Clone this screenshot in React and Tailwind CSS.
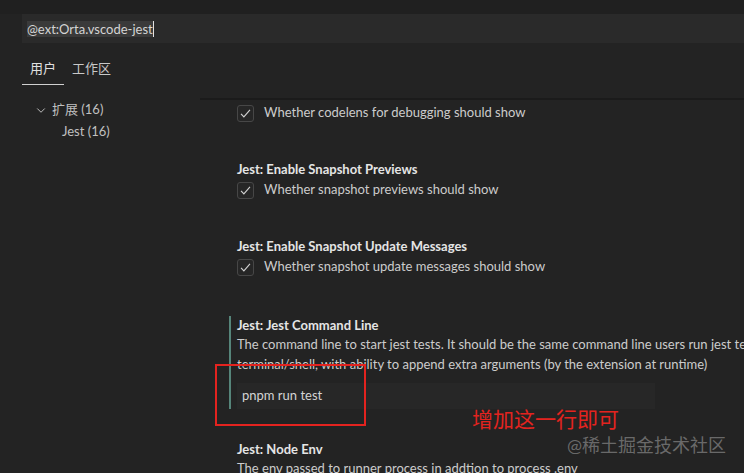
import React from 'react';

const settings = [
  { title: null, label: 'Whether codelens for debugging should show' },
  { title: 'Jest: Enable Snapshot Previews', label: 'Whether snapshot previews should show' },
  { title: 'Jest: Enable Snapshot Update Messages', label: 'Whether snapshot update messages should show' },
];

function Checkbox() {
  return (
    <span className="w-[17px] h-[17px] shrink-0 rounded-[3px] border border-[#474747] bg-[#262626] flex items-center justify-center">
      <svg width="13" height="13" viewBox="0 0 16 16" fill="none" stroke="#d0d0d0" strokeWidth="1.4">
        <path d="M2.5 8.5l3.5 3.8L13.5 3.5" />
      </svg>
    </span>
  );
}

function BoolSetting({ title, label, first }) {
  return (
    <div className={first ? '' : 'mt-[37px]'}>
      {title && <div className="font-bold text-[#e5e5e5] leading-[20px]">{title}</div>}
      <div className={`flex items-center gap-[10px] h-[18px] ${title ? 'mt-[2px]' : ''}`}>
        <Checkbox />
        <span className="whitespace-nowrap">{label}</span>
      </div>
    </div>
  );
}

export default function App() {
  return (
    <div className="relative w-[744px] h-[473px] overflow-hidden bg-[#232323] text-[#cccccc] text-[13px] font-['Lato','Noto_Sans_CJK_SC',sans-serif]">
      <div className="h-[14px] bg-[#202020]" />

      {/* search box */}
      <div className="h-[29px] ml-[22px] bg-[#2a2a2a] flex items-center pl-[5px]">
        <span className="text-[13px] leading-[16px] text-[#d4d4d4] bg-[#3a3a3a] border-r border-[#e0e0e0]">
          @ext:Orta.vscode-jest
        </span>
      </div>

      {/* scope tabs */}
      <div className="flex ml-[22px]">
        <div className="px-[8px] pt-[16px] pb-[7px] leading-[18px] border-b border-[#d0d0d0] text-[#e0e0e0]">用户</div>
        <div className="px-[8px] pt-[16px] pb-[7px] leading-[18px] text-[#c8c8c8]">工作区</div>
      </div>

      <div className="flex">
        {/* table of contents */}
        <div className="w-[200px] shrink-0 pt-[14px] text-[#c0c0c0]">
          <div className="h-[22px] flex items-center pl-[35px]">
            <svg width="12" height="12" viewBox="0 0 16 16" fill="none" stroke="#c0c0c0" strokeWidth="1.3">
              <path d="M3 6l5 5 5-5" />
            </svg>
            <span className="ml-[5px]">扩展 (16)</span>
          </div>
          <div className="h-[22px] flex items-center pl-[62px]">Jest (16)</div>
        </div>

        {/* settings list */}
        <div className="flex-1 min-w-0">
          <div className="h-[13px]" />
          <div className="h-[2px] bg-[#1b1b1b]" />
          <div className="pl-[37px] pt-[4px]">
            {settings.map((s, i) => (
              <BoolSetting key={i} {...s} first={i === 0} />
            ))}

            <div className="mt-[40px] -ml-[8px] pl-[6px] border-l-2 border-[#56857a]">
              <div className="font-bold text-[#e5e5e5] leading-[18px]">Jest: Jest Command Line</div>
              <div className="leading-[20px] whitespace-nowrap">
                The command line to start jest tests. It should be the same command line users run jest tests from a
              </div>
              <div className="leading-[20px] whitespace-nowrap">
                terminal/shell, with ability to append extra arguments (by the extension at runtime)
              </div>
              <div className="mt-[9px] w-[418px] h-[26px] bg-[#272727] flex items-center pl-[5px] text-[#d4d4d4]">
                pnpm run test
              </div>
            </div>

            <div className="mt-[31px] font-bold text-[#e5e5e5] leading-[18px]">Jest: Node Env</div>
            <div className="leading-[20px] whitespace-nowrap">
              The env passed to runner process in addtion to process .env
            </div>
          </div>
        </div>
      </div>

      {/* annotation */}
      <div className="absolute left-[215px] top-[364px] w-[151px] h-[62px] border-2 border-[#e3231f]" />
      <div className="absolute left-[472px] top-[406px] text-[21px] leading-[26px] text-[#e3231f]">增加这一行即可</div>
      <div className="absolute left-[567px] top-[433px] text-[18px] leading-[24px] text-[#8a8a8a]/70">@稀土掘金技术社区</div>
    </div>
  );
}
